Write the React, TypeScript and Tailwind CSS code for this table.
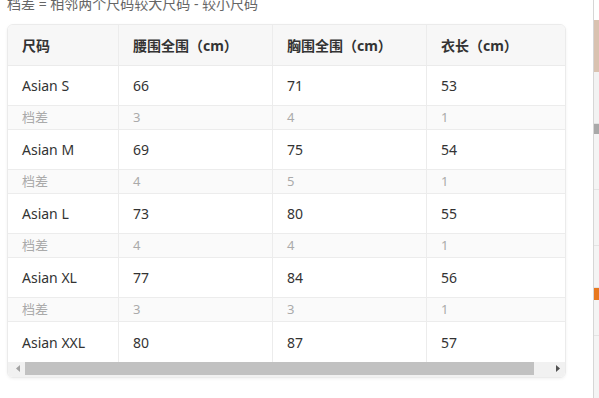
import React from 'react';

type Row = { size: string; waist: number; chest: number; length: number };

const rows: Row[] = [
  { size: 'Asian S', waist: 66, chest: 71, length: 53 },
  { size: 'Asian M', waist: 69, chest: 75, length: 54 },
  { size: 'Asian L', waist: 73, chest: 80, length: 55 },
  { size: 'Asian XL', waist: 77, chest: 84, length: 56 },
  { size: 'Asian XXL', waist: 80, chest: 87, length: 57 },
];

const cols = 'grid grid-cols-[111px_154px_154px_154px]';
const cell = 'flex items-center pl-[14px] border-r border-[#ececec]';

const App: React.FC = () => {
  return (
    <div className="w-[599px] h-[398px] bg-white flex overflow-hidden font-['Noto_Sans','Noto_Sans_CJK_SC',sans-serif]">
      <div className="w-[593px] pl-[7px]">
        <p className="-mt-[6px] text-[14px] leading-[20px] text-[#666]">
          档差 = 相邻两个尺码较大尺码 - 较小尺码
        </p>

        <div className="mt-[10px] w-[559px] border border-[#ebebeb] rounded-[6px] overflow-hidden shadow-[0_1px_3px_rgba(0,0,0,0.06)]">
          {/* header */}
          <div className={`${cols} h-[41px] bg-[#f7f7f7] border-b border-[#ebebeb] text-[14px] font-bold text-[#333]`}>
            <div className={cell}>尺码</div>
            <div className={cell}>腰围全围（cm）</div>
            <div className={cell}>胸围全围（cm）</div>
            <div className={cell}>衣长（cm）</div>
          </div>

          {rows.map((r, i) => {
            const next = rows[i + 1];
            return (
              <React.Fragment key={r.size}>
                <div className={`${cols} h-[40px] bg-white text-[14px] text-[#333] ${next ? 'border-b border-[#ececec]' : ''}`}>
                  <div className={cell}>{r.size}</div>
                  <div className={cell}>{r.waist}</div>
                  <div className={cell}>{r.chest}</div>
                  <div className={cell}>{r.length}</div>
                </div>
                {next && (
                  <div className={`${cols} h-[24px] bg-[#fafafa] border-b border-[#ececec] text-[13px] text-[#aaa]`}>
                    <div className={cell}>档差</div>
                    <div className={cell}>{next.waist - r.waist}</div>
                    <div className={cell}>{next.chest - r.chest}</div>
                    <div className={cell}>{next.length - r.length}</div>
                  </div>
                )}
              </React.Fragment>
            );
          })}

          {/* horizontal scrollbar */}
          <div className="h-[15px] bg-[#f1f1f1] flex items-start">
            <div className="w-[15px] h-[13px] flex items-center justify-center pl-[4px]">
              <svg width="4" height="7" viewBox="0 0 4 7">
                <path d="M4 0 L0 3.5 L4 7 Z" fill="#a3a3a3" />
              </svg>
            </div>
            <div className="ml-[2px] w-[509px] h-[13px] bg-[#c1c1c1]" />
            <div className="flex-1 h-[13px] flex items-center justify-end pr-[5px]">
              <svg width="4" height="7" viewBox="0 0 4 7">
                <path d="M0 0 L4 3.5 L0 7 Z" fill="#505050" />
              </svg>
            </div>
          </div>
        </div>
      </div>

      <div className="w-px bg-[#d6d6d6]" />
      <div className="flex-1 flex flex-col bg-[#f4f4f4]">
        <div className="h-[20px] bg-white" />
        <div className="h-[52px] bg-[#d9c2b0]" />
        <div className="h-[52px] bg-[#f2f2f2] border-b border-[#e2e2e2]" />
        <div className="h-[10px] bg-[#a9a9a9]" />
        <div className="h-[56px] border-b border-[#e4e4e4]" />
        <div className="h-[56px] border-b border-[#e4e4e4]" />
        <div className="h-[42px] border-b border-[#e4e4e4]" />
        <div className="h-[12px] bg-[#e8781e]" />
        <div className="h-[36px] border-b border-[#e4e4e4]" />
        <div className="flex-1" />
      </div>
    </div>
  );
};

export default App;
